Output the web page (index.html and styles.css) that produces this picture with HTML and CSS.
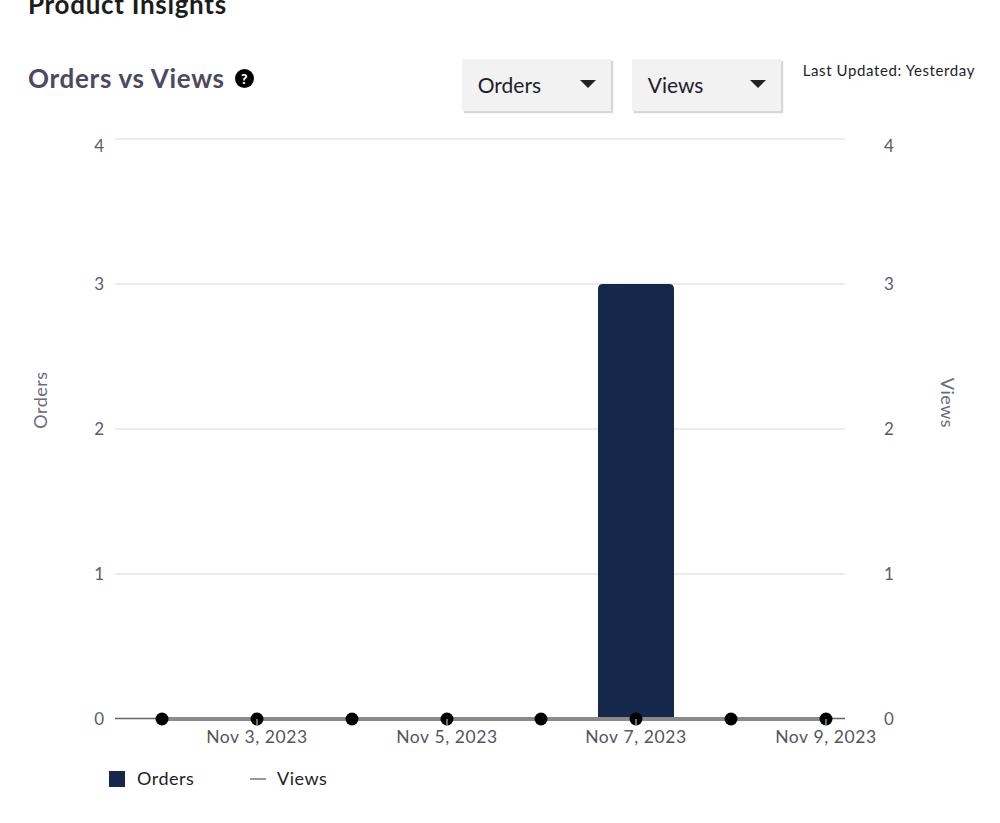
FILE: index.html
```html
<!DOCTYPE html>
<html>
<head>
<meta charset="utf-8">
<link rel="stylesheet" href="styles.css">
</head>
<body>
<div class="page">
  <h1 class="page-title">Product Insights</h1>
  <div class="chart-header">
    <div class="chart-title">
      <span>Orders vs Views</span>
      <span class="help-icon">?</span>
    </div>
    <div class="dropdowns">
      <div class="dropdown"><span>Orders</span><span class="caret"></span></div>
      <div class="dropdown"><span>Views</span><span class="caret"></span></div>
    </div>
    <div class="last-updated">Last Updated: Yesterday</div>
  </div>
</div>
<svg class="chart" width="1000" height="703" viewBox="0 120 1000 703" xmlns="http://www.w3.org/2000/svg">
  <g class="grid" stroke="#e6e6e6" stroke-width="1.5">
    <line x1="115" y1="139" x2="845" y2="139"/>
    <line x1="115" y1="284" x2="845" y2="284"/>
    <line x1="115" y1="429" x2="845" y2="429"/>
    <line x1="115" y1="574" x2="845" y2="574"/>
  </g>
  <g class="tick" text-anchor="end">
    <text x="104" y="152">4</text>
    <text x="104" y="290">3</text>
    <text x="104" y="435">2</text>
    <text x="104" y="580">1</text>
    <text x="104" y="725">0</text>
  </g>
  <g class="tick" text-anchor="start">
    <text x="884" y="152">4</text>
    <text x="884" y="290">3</text>
    <text x="884" y="435">2</text>
    <text x="884" y="580">1</text>
    <text x="884" y="725">0</text>
  </g>
  <text class="axis-title" text-anchor="middle" transform="translate(47 400) rotate(-90)">Orders</text>
  <text class="axis-title" text-anchor="middle" transform="translate(941 403) rotate(90)">Views</text>
  <path d="M598 717 V289 Q598 284 603 284 H669 Q674 284 674 289 V717 Z" fill="#15284c"/>
  <line x1="115" y1="718.5" x2="845" y2="718.5" stroke="#666" stroke-width="1.5"/>
  <line x1="162" y1="719" x2="826" y2="719" stroke="#8a8a8a" stroke-width="4"/>
  <g fill="#000">
    <circle cx="162" cy="719" r="6.5"/>
    <circle cx="257" cy="719" r="6.5"/>
    <circle cx="352" cy="719" r="6.5"/>
    <circle cx="447" cy="719" r="6.5"/>
    <circle cx="541" cy="719" r="6.5"/>
    <circle cx="636" cy="719" r="6.5"/>
    <circle cx="731" cy="719" r="6.5"/>
    <circle cx="826" cy="719" r="6.5"/>
  </g>
  <g stroke="#ddd" stroke-width="1">
    <line x1="257" y1="719" x2="257" y2="725"/>
    <line x1="447" y1="719" x2="447" y2="725"/>
    <line x1="636" y1="719" x2="636" y2="725"/>
    <line x1="826" y1="719" x2="826" y2="725"/>
  </g>
  <g class="xlabel" text-anchor="middle">
    <text x="257" y="743">Nov 3, 2023</text>
    <text x="447" y="743">Nov 5, 2023</text>
    <text x="636" y="743">Nov 7, 2023</text>
    <text x="826" y="743">Nov 9, 2023</text>
  </g>
  <rect x="109" y="771" width="16" height="16" fill="#15284c"/>
  <text class="legend" x="137" y="785">Orders</text>
  <line x1="250" y1="779" x2="266" y2="779" stroke="#999" stroke-width="2"/>
  <text class="legend" x="277" y="785">Views</text>
</svg>
</body>
</html>
```
FILE: styles.css
```css
html, body {
  margin: 0;
  padding: 0;
  background: #fff;
  font-family: "Lato", "Open Sans", sans-serif;
  overflow: hidden;
}
.page {
  padding: 0 25px 0 28px;
}
.page-title {
  margin: -11px 0 0;
  height: 30px;
  font-size: 26px;
  line-height: 30px;
  letter-spacing: 0.7px;
  font-weight: 700;
  color: #1c1c1c;
}
.chart-header {
  display: flex;
  align-items: flex-start;
  margin-top: 40px;
  height: 61px;
}
.chart-title {
  flex: 1;
  display: flex;
  align-items: center;
  gap: 10px;
  font-size: 26px;
  line-height: 38px;
  letter-spacing: 0.7px;
  font-weight: 700;
  color: #4b4a62;
}
.help-icon {
  width: 19px;
  height: 19px;
  border-radius: 50%;
  background: #000;
  color: #fff;
  font-size: 14px;
  line-height: 19px;
  letter-spacing: 0;
  font-weight: 900;
  text-align: center;
}
.dropdowns {
  display: flex;
  gap: 21px;
}
.dropdown {
  width: 149px;
  height: 52px;
  box-sizing: border-box;
  padding: 0 15px 2px 16px;
  display: flex;
  align-items: center;
  justify-content: space-between;
  background: #f2f2f2;
  box-shadow: 2px 2px 1px rgba(0, 0, 0, 0.16);
  font-size: 21px;
  color: #1e1e2a;
}
.caret {
  width: 0;
  height: 0;
  border-left: 8px solid transparent;
  border-right: 8px solid transparent;
  border-top: 8px solid #222;
}
.last-updated {
  margin-left: 22px;
  padding-top: 2px;
  font-size: 15px;
  line-height: 18px;
  letter-spacing: 0.6px;
  color: #1e1e2a;
}
.chart {
  display: block;
}
.tick {
  font-family: "Lato", sans-serif;
  font-size: 17px;
  fill: #5a5a6e;
}
.axis-title {
  font-family: "Lato", sans-serif;
  font-size: 18px;
  letter-spacing: 0.5px;
  fill: #6a6a7a;
}
.xlabel {
  font-family: "Lato", sans-serif;
  font-size: 17.5px;
  letter-spacing: 0.6px;
  fill: #555560;
}
.legend {
  font-family: "Lato", sans-serif;
  font-size: 18px;
  letter-spacing: 0.5px;
  fill: #1e1e2a;
}
```
